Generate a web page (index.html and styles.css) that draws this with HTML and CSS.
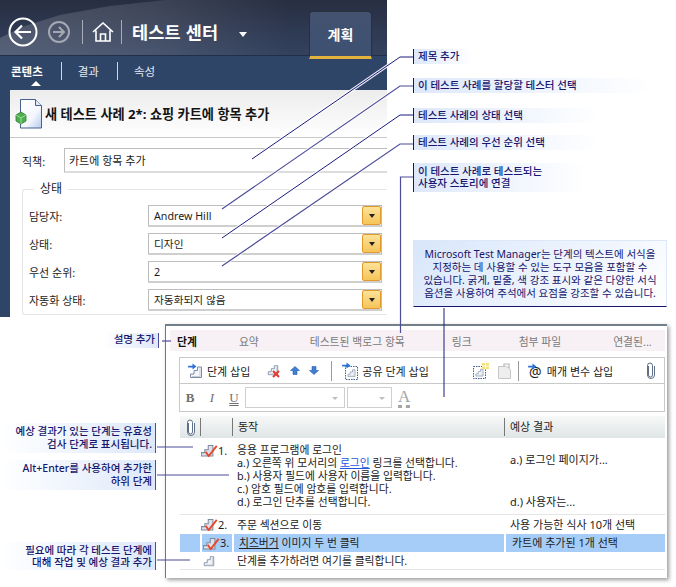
FILE: index.html
```html
<!DOCTYPE html>
<html lang="ko">
<head>
<meta charset="utf-8">
<title>테스트 센터</title>
<link rel="stylesheet" href="styles.css">
</head>
<body>
<svg class="defs" width="0" height="0" aria-hidden="true">
  <symbol id="stairs" viewBox="0 0 14 14">
    <path d="M1.500 12.500V9h3.500V5.500h3.500V2h4v10.500z" fill="#f2f5fa" stroke="#7d8ba3"/>
    <path d="M11 3.500v8H3" fill="none" stroke="#c3ccda"/>
  </symbol>
  <symbol id="checked" viewBox="0 0 20 15">
    <path d="M.5 14V10h4V6.500h4V1.500h5.500V14z" fill="#dde1e9" stroke="#7f899d" stroke-width="1.200"/>
    <path d="M5.500 9l3.500 5L18.500 2" fill="none" stroke="#e8452c" stroke-width="2.200"/>
  </symbol>
  <symbol id="clip" viewBox="0 0 9 17">
    <path d="M2.500 4v9a2 2 0 0 0 4 0V3.500a2.500 2.500 0 0 0-5 0V13a3.500 3.500 0 0 0 7 0V4" fill="#fff" stroke="#5e6e86"/>
  </symbol>
  <symbol id="blue-arrow" viewBox="0 0 10 9">
    <path d="M5 .5L9.500 4.500H7V8.500H3V4.500H.5z" fill="#3f7fd6" stroke="#2a5ea8" stroke-width=".6"/>
  </symbol>
  <symbol id="in-arrow" viewBox="0 0 10 8">
    <path d="M0 3h5V.5L9.500 4 5 7.500V5H0z" fill="#2a72d8"/>
  </symbol>
</svg>

<main class="sheet">
  <section class="app">
    <header class="topbar">
      <svg class="nav-back" viewBox="0 0 30 30" width="30" height="30">
        <circle cx="15" cy="15" r="13.500" fill="none" stroke="#fff" stroke-width="2"/>
        <path d="M23 15H8M14 8.500L7.500 15l6.500 6.500" fill="none" stroke="#fff" stroke-width="2.200"/>
      </svg>
      <svg class="nav-next" viewBox="0 0 22 22" width="22" height="22">
        <circle cx="11" cy="11" r="10" fill="none" stroke="#a3a8b2" stroke-width="2"/>
        <path d="M5 11h11M11 6l5 5-5 5" fill="none" stroke="#a3a8b2" stroke-width="2"/>
      </svg>
      <span class="bar-sep"></span>
      <svg class="nav-home" viewBox="0 0 22 20" width="22" height="20">
        <path d="M1 10L11 1l10 9M4 8.500V19h14V8.500M8.500 19v-7h5v7" fill="none" stroke="#fff" stroke-width="1.600"/>
      </svg>
      <span class="bar-sep bar-sep-b"></span>
      <h1 class="app-title">테스트 센터</h1>
      <span class="title-caret"></span>
      <span class="plan-tab">계획</span>
    </header>
    <nav class="subnav">
      <span class="subnav-item is-on">콘텐츠</span>
      <span class="subnav-item">결과</span>
      <span class="subnav-item">속성</span>
    </nav>
    <div class="card">
      <div class="card-head">
        <svg class="doc-icon" viewBox="0 0 28 30" width="28" height="30">
          <defs><linearGradient id="paper" x1="0" y1="0" x2="1" y2="1"><stop offset="0" stop-color="#fff"/><stop offset=".6" stop-color="#f4f7fd"/><stop offset="1" stop-color="#b4caee"/></linearGradient></defs>
          <path d="M5.500 .5h15l6 6v22.500h-21z" fill="url(#paper)" stroke="#46608e"/>
          <path d="M20.500 .5v6h6" fill="#dfe8f6" stroke="#46608e"/>
          <path d="M6 13l5 3v6l-5 3-5-3v-6z" fill="#4cae4c" stroke="#2f7f36" stroke-width=".8"/>
          <path d="M1 16l5 3 5-3M6 19v6" fill="none" stroke="#b8e6b0" stroke-width=".8"/>
        </svg>
        <h2 class="card-title">새 테스트 사례 2*: 쇼핑 카트에 항목 추가</h2>
      </div>
      <div class="title-row">
        <span class="field-label">직책:</span>
        <span class="title-input">카트에 항목 추가</span>
      </div>
      <fieldset class="status-group">
        <legend class="status-legend">상태</legend>
        <div class="status-row">
          <span class="status-label">담당자:</span>
          <span class="combo"><span class="combo-text">Andrew Hill</span><span class="combo-btn"></span></span>
        </div>
        <div class="status-row">
          <span class="status-label">상태:</span>
          <span class="combo"><span class="combo-text">디자인</span><span class="combo-btn"></span></span>
        </div>
        <div class="status-row">
          <span class="status-label">우선 순위:</span>
          <span class="combo"><span class="combo-text">2</span><span class="combo-btn"></span></span>
        </div>
        <div class="status-row">
          <span class="status-label">자동화 상태:</span>
          <span class="combo"><span class="combo-text">자동화되지 않음</span><span class="combo-btn"></span></span>
        </div>
      </fieldset>
    </div>
  </section>

  <section class="steps-panel">
    <div class="tabs">
      <span class="tab tab-on">단계</span>
      <span class="tab tab-summary">요약</span>
      <span class="tab tab-backlog">테스트된 백로그 항목</span>
      <span class="tab tab-link">링크</span>
      <span class="tab tab-attach">첨부 파일</span>
      <span class="tab tab-related">연결된...</span>
    </div>
    <div class="toolbar">
      <svg class="tool-ico ico-insert" viewBox="0 0 15 16" width="15" height="16">
        <use href="#stairs" x="1" y="2" width="14" height="14"/>
        <use href="#in-arrow" x="0" y="0" width="9" height="7"/>
      </svg>
      <span class="tool-text">단계 삽입</span>
      <svg class="tool-ico ico-delete" viewBox="0 0 14 14" width="14" height="14">
        <use href="#stairs" width="12" height="12"/>
        <path d="M6 7l6 6M12 7l-6 6" stroke="#e23b2e" stroke-width="2"/>
      </svg>
      <svg class="tool-ico ico-up" viewBox="0 0 10 9" width="10" height="9"><use href="#blue-arrow"/></svg>
      <svg class="tool-ico ico-down" viewBox="0 0 10 9" width="10" height="9"><g transform="rotate(180 5 4.500)"><use href="#blue-arrow"/></g></svg>
      <span class="tool-sep sep-a"></span>
      <svg class="tool-ico ico-shared" viewBox="0 0 16 18" width="16" height="18">
        <rect x="3.500" y="4.500" width="12" height="13" fill="none" stroke="#3a5f96" stroke-dasharray="1.500 1"/>
        <use href="#stairs" x="5" y="6" width="9" height="10"/>
        <use href="#in-arrow" x="0" y="0" width="9" height="7"/>
      </svg>
      <span class="tool-text">공유 단계 삽입</span>
      <svg class="tool-ico ico-newshared" viewBox="0 0 16 16" width="16" height="16">
        <rect x=".5" y="3.500" width="12" height="12" fill="none" stroke="#3a5f96" stroke-dasharray="1.500 1"/>
        <use href="#stairs" x="2" y="5" width="9" height="9"/>
        <path d="M9 0h7v6H9z" fill="#f7e27a"/>
        <path d="M12.500 0v6M9 3h7" stroke="#fff"/>
      </svg>
      <svg class="tool-ico ico-paste" viewBox="0 0 13 16" width="13" height="16">
        <path d="M.5 3.500h8l4 3V15.500H.5z" fill="#eeeeee" stroke="#c6c6c6"/>
        <path d="M6 3V1h5v4" fill="none" stroke="#b5b5b5" stroke-width="1.200"/>
      </svg>
      <span class="tool-sep sep-b"></span>
      <svg class="tool-ico ico-param" viewBox="0 0 15 16" width="15" height="16">
        <text x="1" y="14" class="at-sign">@</text>
        <use href="#in-arrow" x="0" y="0" width="9" height="7"/>
      </svg>
      <span class="tool-text">매개 변수 삽입</span>
      <svg class="tool-ico ico-clip" viewBox="0 0 9 17" width="9" height="17"><use href="#clip"/></svg>
    </div>
    <div class="formatbar">
      <b class="fmt fmt-b">B</b>
      <i class="fmt fmt-i">I</i>
      <u class="fmt fmt-u">U</u>
      <span class="fmt-select fmt-font"></span>
      <span class="fmt-select fmt-size"></span>
      <span class="fmt-color">A</span>
    </div>
    <div class="grid-head">
      <span class="cell-clip"><svg viewBox="0 0 9 17" width="9" height="17"><use href="#clip"/></svg></span>
      <span class="cell-step"></span>
      <span class="head-action">동작</span>
      <span class="head-expected">예상 결과</span>
    </div>
    <div class="step step-long">
      <span></span>
      <span class="step-no"><svg viewBox="0 0 20 15" width="17" height="13"><use href="#checked"/></svg>1.</span>
      <div class="step-action">
        응용 프로그램에 로그인<br>
        a.) 오른쪽 위 모서리의 <a class="step-link">로그인</a> 링크를 선택합니다.<br>
        b.) 사용자 필드에 사용자 이름을 입력합니다.<br>
        c.) 암호 필드에 암호를 입력합니다.<br>
        d.) 로그인 단추를 선택합니다.
      </div>
      <div class="step-expected">
        <div class="exp-a">a.) 로그인 페이지가...</div>
        <div class="exp-d">d.) 사용자는...</div>
      </div>
    </div>
    <div class="step step-short">
      <span></span>
      <span class="step-no"><svg viewBox="0 0 20 15" width="17" height="13"><use href="#checked"/></svg>2.</span>
      <div class="step-action">주문 섹션으로 이동</div>
      <div class="step-expected">사용 가능한 식사 10개 선택</div>
    </div>
    <div class="step step-short step-selected">
      <span class="sel-cell"></span>
      <span class="step-no sel-cell"><svg viewBox="0 0 20 15" width="17" height="13"><use href="#checked"/></svg>3.</span>
      <div class="step-action sel-cell"><span class="term">치즈버거</span> 이미지 두 번 클릭</div>
      <div class="step-expected sel-cell">카트에 추가된 1개 선택</div>
    </div>
    <div class="step step-short step-add">
      <span></span>
      <span class="step-no"><svg class="add-ico" viewBox="0 0 14 14" width="12" height="12"><use href="#stairs"/></svg></span>
      <div class="step-action">단계를 추가하려면 여기를 클릭합니다.</div>
      <div class="step-expected"></div>
    </div>
  </section>

  <svg class="leaders" viewBox="0 0 676 587" width="676" height="587" aria-hidden="true">
    <g class="halo">
      <path d="M400 57L252 159M400 86L222 209M400 115L222 238M400 144L222 266"/>
    </g>
    <g class="lead">
      <path d="M413 57H400L252 159"/>
      <path d="M413 115H400L222 238"/>
      <path d="M444 308V397"/>
    </g>
    <g class="lead lead-soft">
      <path d="M413 86H400L222 209"/>
      <path d="M413 144H400L222 266"/>
      <path d="M413 177H400.500V333"/>
      <path d="M157 447H193"/>
      <path d="M162 341H171"/>
      <path d="M157 475H229"/>
      <path d="M157 560H190"/>
    </g>
  </svg>

  <p class="note note-r n-title">제목 추가</p>
  <p class="note note-r n-tester">이 테스트 사례를 할당할 테스터 선택</p>
  <p class="note note-r n-state">테스트 사례의 상태 선택</p>
  <p class="note note-r n-priority">테스트 사례의 우선 순위 선택</p>
  <p class="note note-r n-story">이 테스트 사례로 테스트되는<br>사용자 스토리에 연결</p>
  <p class="note note-box">Microsoft Test Manager는 단계의 텍스트에 서식을<br>지정하는 데 사용할 수 있는 도구 모음을 포함할 수<br>있습니다. 굵게, 밑줄, 색 강조 표시와 같은 다양한 서식<br>옵션을 사용하여 주석에서 요점을 강조할 수 있습니다.</p>
  <p class="note note-l n-desc">설명 추가</p>
  <p class="note note-l n-valid">예상 결과가 있는 단계는 유효성<br>검사 단계로 표시됩니다.</p>
  <p class="note note-l n-sub">Alt+Enter를 사용하여 추가한<br>하위 단계</p>
  <p class="note note-l n-each">필요에 따라 각 테스트 단계에<br>대해 작업 및 예상 결과 추가</p>
</main>
</body>
</html>
```

FILE: styles.css
```css
* { box-sizing: border-box; }

html, body {
  margin: 0;
  background: #fff;
}

body {
  font-family: "Noto Sans", "Noto Sans CJK KR", sans-serif;
  font-size: 11px;
  color: #1c1c1c;
}

.defs { position: absolute; }

.sheet {
  position: relative;
  width: 676px;
  height: 587px;
  overflow: hidden;
}

/* Test center window */
.app {
  width: 387px;
  height: 317px;
  background: #2f4568;
  display: flex;
  flex-direction: column;
}

.topbar {
  position: relative;
  isolation: isolate;
  height: 59px;
  display: flex;
  align-items: center;
  padding: 5px 15px 0 8px;
  color: #fff;
  background:
    linear-gradient(180deg, transparent 55px, #232f47 55px, #232f47 56px, #2f4568 56px),
    linear-gradient(180deg, #272e42 0, #34425f 55px);
}

/* Lighter sweep behind the navigation buttons */
.topbar::before {
  content: "";
  position: absolute;
  z-index: -1;
  left: 0;
  top: 0;
  width: 100%;
  height: 55px;
  background: linear-gradient(90deg, rgba(255, 255, 255, .17), rgba(255, 255, 255, .1) 40%, rgba(255, 255, 255, 0) 75%);
  clip-path: polygon(165px 0, 110px 6px, 60px 15px, 25px 26px, 0 38px, 0 100%, 100% 100%, 100% 0);
}

.nav-next { margin-left: 10px; }

.bar-sep {
  width: 1px;
  height: 24px;
  margin: 0 9px 0 12px;
  background: #a7acb6;
}

.bar-sep-b { margin: 0 10px 0 7px; }

.app-title {
  margin: 0;
  font-size: 17.500px;
  line-height: 24px;
  font-weight: 700;
  letter-spacing: .2px;
}

.title-caret {
  margin: 4px 0 0 21px;
  border-left: 4.500px solid transparent;
  border-right: 4.500px solid transparent;
  border-top: 5px solid #fff;
}

.plan-tab {
  margin-left: auto;
  align-self: flex-end;
  width: 63px;
  height: 48px;
  padding-top: 13px;
  text-align: center;
  font-size: 14px;
  font-weight: 700;
  line-height: 20px;
  background: linear-gradient(180deg, #43526f, #3e5172);
  border: 1px solid #2a2f3d;
  border-bottom: 3px solid #e3b23c;
  border-radius: 4px 4px 0 0;
}

.subnav {
  height: 31px;
  padding: 0 0 7px 11px;
  display: flex;
  align-items: center;
  color: #fff;
}

.subnav-item {
  position: relative;
  display: flex;
  align-items: center;
  height: 18px;
  font-size: 11.500px;
  color: #e3e8f0;
}

.subnav-item + .subnav-item {
  margin-left: 18px;
  padding-left: 16px;
  border-left: 1px solid #c9d6e6;
}

.is-on { color: #fff; font-weight: 700; }

.is-on::after {
  content: "";
  position: absolute;
  left: 20px;
  top: 19px;
  border-left: 5px solid transparent;
  border-right: 5px solid transparent;
  border-bottom: 5px solid #fff;
}

.card {
  flex: 1;
  margin-left: 10px;
  background: #fff;
  border-radius: 4px 0 0 0;
}

.card-head {
  height: 48px;
  display: flex;
  align-items: center;
  gap: 2px;
  padding-left: 5px;
  border-bottom: 1px solid #c9c9c9;
  background: linear-gradient(180deg, #ececec, #fff);
}

.doc-icon { flex: none; }

.card-title {
  margin: 0;
  font-size: 13.200px;
  line-height: 18px;
  font-weight: 700;
  color: #141414;
}

.title-row {
  margin-top: 10px;
  height: 25px;
  display: flex;
  align-items: center;
  padding-left: 12px;
}

.field-label { width: 42px; }

.title-input {
  flex: 1;
  height: 25px;
  padding-left: 4px;
  line-height: 23px;
  border-top: 1px solid #bdbdbd;
  border-left: 1px solid #bdbdbd;
  border-bottom: 2px solid #dddddd;
}

.status-group {
  margin: 9px 0 0 12px;
  padding: 9px 5px 0 6px;
  height: 133px;
  min-width: 0;
  border: 1px solid #e6e6e6;
  border-right: 0;
  border-radius: 3px 0 0 3px;
}

.status-legend {
  margin-left: 5px;
  padding: 0 6px;
  font-size: 12px;
  line-height: 14px;
}

.status-row {
  display: flex;
  align-items: center;
  height: 22px;
  margin-bottom: 6px;
}

.status-label { width: 119px; }

.combo {
  flex: 1;
  height: 22px;
  display: flex;
  align-items: center;
  justify-content: space-between;
  padding: 1px 0 1px 5px;
  background: #fff;
  border: 1px solid #bdbdbd;
  border-bottom-width: 2px;
  border-bottom-color: #cfcfcf;
}

.combo-text { font-size: 10.700px; }

.combo-btn {
  display: flex;
  align-items: center;
  justify-content: center;
  width: 19px;
  height: 19px;
  background: linear-gradient(180deg, #fbe29a, #f6c45a);
  border: 1px solid #e29a2a;
  border-radius: 2px;
}

.combo-btn::after {
  content: "";
  border-left: 3.500px solid transparent;
  border-right: 3.500px solid transparent;
  border-top: 4px solid #222;
}

/* Steps editor window */
.steps-panel {
  width: 502px;
  height: 254px;
  margin: 7px 0 0 165px;
  padding: 4px 2px 0 4px;
  background: #fff;
  border-top: 2px solid #71808a;
  border-left: 1px solid #6f7780;
  box-shadow: 2px 2px 4px rgba(0, 0, 0, .4);
}

.tabs {
  height: 21px;
  padding-left: 7px;
  display: flex;
  align-items: center;
  background: #f7f1f5;
  color: #7a7a7a;
  font-size: 10.800px;
}

.tab-on { font-weight: 700; color: #111; }
.tab-summary { margin-left: 42px; }
.tab-backlog { margin-left: 51px; }
.tab-link { margin-left: 47px; }
.tab-attach { margin-left: 47px; }
.tab-related { margin-left: 52px; }

.toolbar {
  height: 27px;
  margin: 6px 0 0 9px;
  display: flex;
  align-items: center;
  padding-left: 8px;
  border: 1px solid #c9c9c9;
}

.tool-ico { flex: none; }

.tool-text {
  margin-left: 4px;
  white-space: nowrap;
}

.ico-delete { margin-left: 17px; }
.ico-up { margin-left: 9px; }
.ico-down { margin-left: 9px; }

.tool-sep {
  width: 1px;
  height: 20px;
  background: #9a9a9a;
}

.sep-a { margin: 0 10px 0 12px; }
.sep-b { margin: 0 9px 0 7px; }
.ico-newshared { margin-left: 44px; }
.ico-paste { margin-left: 9px; }
.ico-clip { margin-left: 33px; }
.ico-param { overflow: visible; }

.at-sign {
  font-size: 14px;
  fill: #222;
}

.formatbar {
  height: 28px;
  margin-left: 9px;
  display: flex;
  align-items: center;
  padding-left: 5px;
  border: 1px solid #c9c9c9;
  border-top: 0;
  color: #707070;
}

.fmt {
  width: 10px;
  font-family: "Liberation Serif", serif;
  font-size: 13px;
  text-align: center;
}

.fmt-i { margin-left: 12px; }
.fmt-u { margin-left: 12px; text-decoration-style: double; }

.fmt-select {
  height: 21px;
  background: #fff;
  border: 1px solid #cfcfcf;
  position: relative;
}

.fmt-select::after {
  content: "";
  position: absolute;
  right: 6px;
  top: 9px;
  border-left: 3px solid transparent;
  border-right: 3px solid transparent;
  border-top: 3px solid #bdbdbd;
}

.fmt-font { width: 100px; margin-left: 6px; }
.fmt-size { width: 45px; margin-left: 2px; }

.fmt-color {
  margin-left: 6px;
  font-family: "Liberation Serif", serif;
  font-size: 17px;
  line-height: 17px;
  color: #a5a5a5;
  border-bottom: 3px dotted #a5a5a5;
}

.grid-head {
  height: 22px;
  margin: 4px 0 0 10px;
  display: grid;
  grid-template-columns: 20px 32px 272px 1fr;
  align-items: center;
  background: linear-gradient(180deg, #f7f8f8, #dfe5e6);
}

.cell-clip { display: flex; justify-content: center; }
.cell-step, .head-action, .head-expected {
  height: 18px;
  line-height: 18px;
  border-left: 1px solid #777;
}
.head-action, .head-expected { padding-left: 5px; }

.step {
  margin-left: 10px;
  display: grid;
  grid-template-columns: 20px 32px 272px 1fr;
  line-height: 13px;
  border-bottom: 1px solid #e5e5e5;
  color: #222;
}

.step-long { height: 77px; padding-top: 5px; }
.step-short { height: 18px; align-items: center; border-bottom: 0; }
.step-add { height: 18px; border-bottom: 1px solid #e5e5e5; }
.step-long + .step-short { margin-top: 1px; height: 16px; }

.step-no {
  display: flex;
  align-items: center;
  height: 15px;
  padding-left: 1px;
}

.step-action { padding-left: 5px; white-space: nowrap; font-size: 10.800px; }
.step-expected { padding-left: 6px; white-space: nowrap; }

.step-selected { height: 18px; margin-top: 2px; }
.sel-cell {
  align-self: stretch;
  height: 18px;
  line-height: 18px;
  background: #a5cdf7;
}
.step-selected .sel-cell + .sel-cell { border-left: 2px solid #fff; }
.step-no.sel-cell { display: flex; }

.term { text-decoration: underline; }
.step-link { color: #1f56e0; text-decoration: underline; }
.exp-a { margin-top: 10px; }
.exp-d { margin-top: 29px; }
.add-ico { margin-left: 2px; }

/* Callouts laid over the two windows */
.leaders {
  position: absolute;
  left: 0;
  top: 0;
  fill: none;
  pointer-events: none;
}

.halo { stroke: rgba(255, 255, 255, .9); stroke-width: 3; }
.lead { stroke: #1b1b80; stroke-width: 1; }
.lead-soft { stroke: #4d4d99; stroke-width: 1.200; }

.note {
  position: absolute;
  margin: 0;
  color: #16166e;
  font-size: 10.500px;
  font-weight: 500;
  line-height: 13px;
  white-space: nowrap;
}

.note-r {
  left: 413px;
  padding: 1px 0 0 4px;
  border-left: 1px solid #16166e;
  background: linear-gradient(90deg, #dde8fa, #fff);
}

.n-title { top: 49px; width: 60px; height: 15px; }
.n-tester { top: 78px; width: 239px; height: 15px; }
.n-state { top: 108px; width: 187px; height: 15px; }
.n-priority { top: 135px; width: 187px; height: 15px; }
.n-story { top: 163px; width: 174px; height: 29px; padding-top: 2px; line-height: 12px; }

.note-box {
  left: 413px;
  top: 240px;
  width: 254px;
  height: 67px;
  padding: 7px 0 0;
  text-align: center;
  font-weight: 400;
  background: linear-gradient(135deg, #d8e6fb, #fff);
  border: 1px solid #dce7f8;
  border-bottom: 1px solid #16166e;
}

.note-l {
  text-align: right;
  padding-right: 3px;
  border-right: 1px solid #4d4d99;
  background: linear-gradient(270deg, #dde8fa, #fff);
}

.n-desc { left: 103px; top: 333px; width: 56px; height: 15px; }
.n-valid { left: 0; top: 423px; width: 156px; height: 30px; padding-top: 2px; }
.n-sub { left: 0; top: 460px; width: 156px; height: 30px; padding-top: 2px; }
.n-each { left: 0; top: 542px; width: 156px; height: 28px; padding-top: 2px; line-height: 12px; }
```
